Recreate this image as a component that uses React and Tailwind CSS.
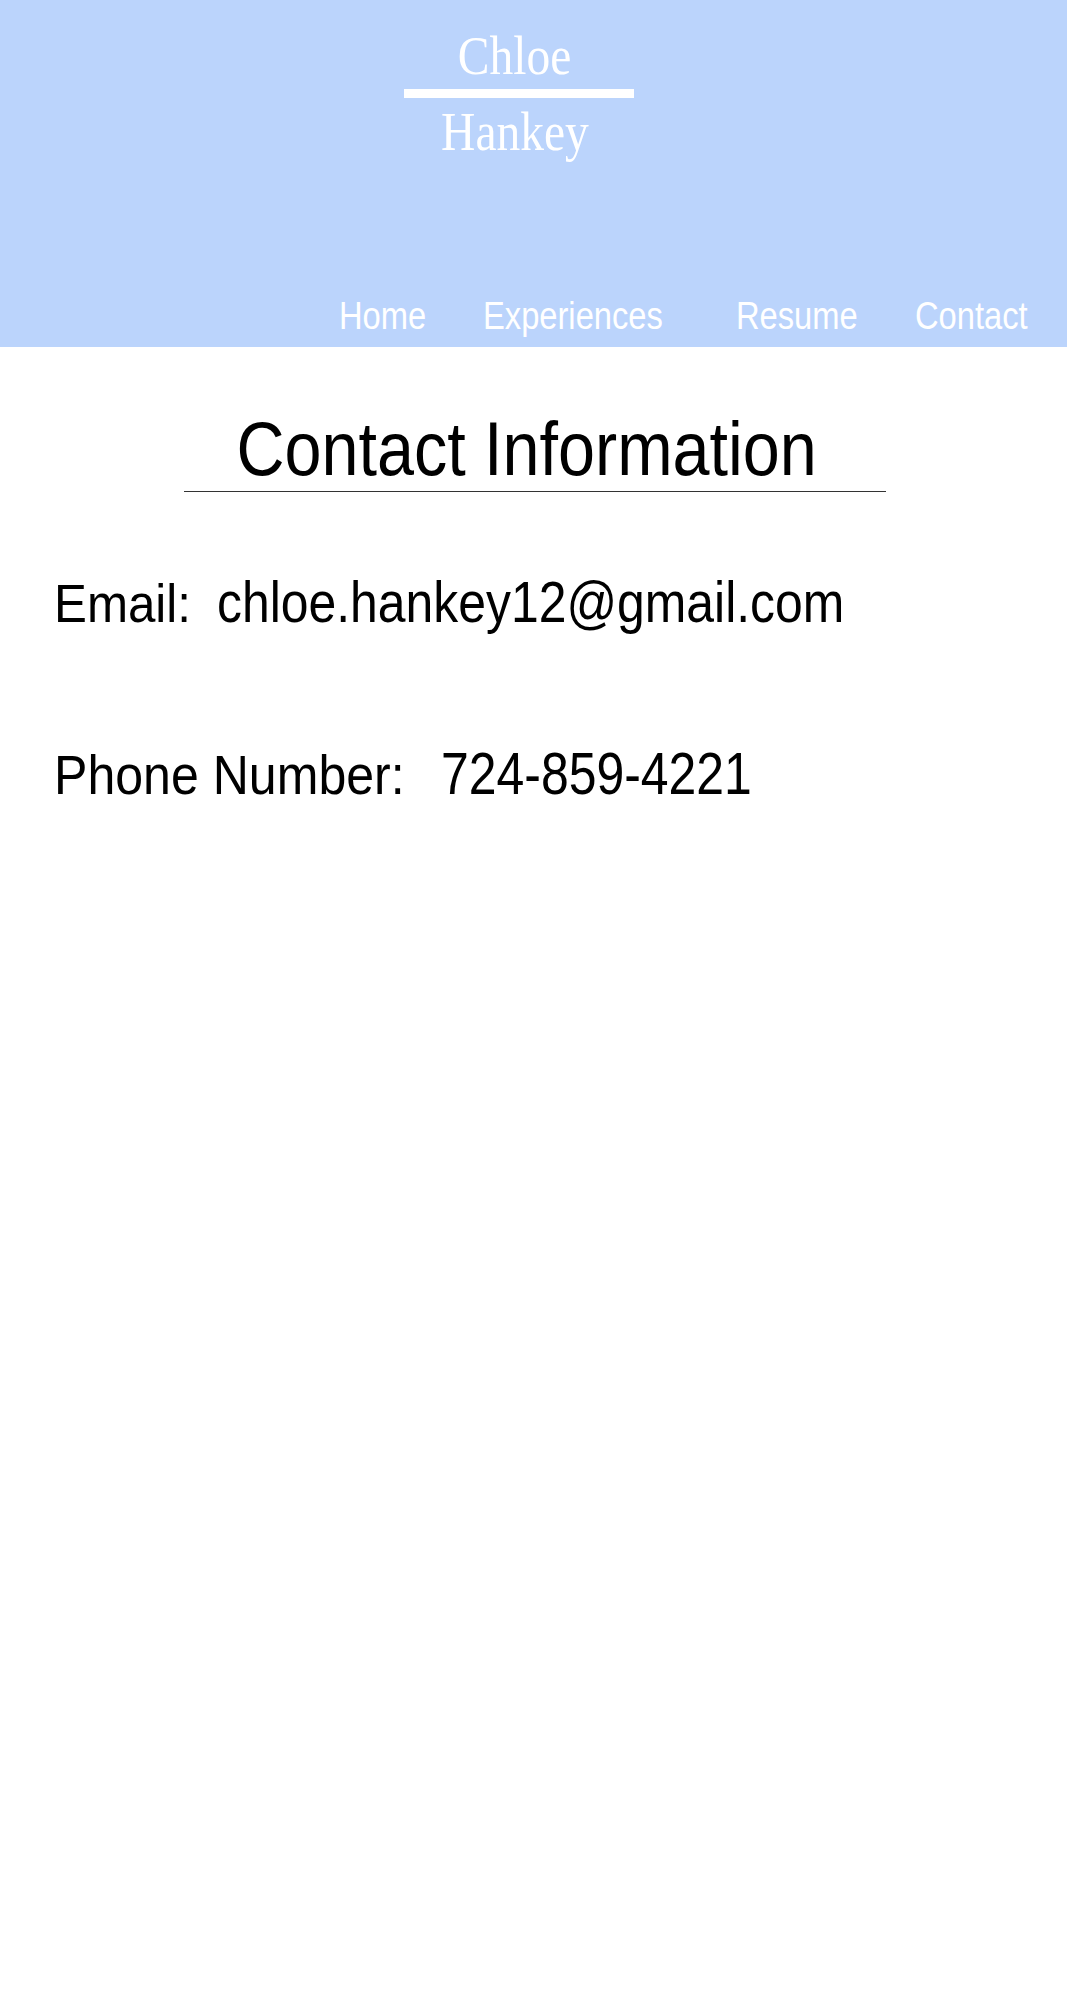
import React from 'react';

const sans = { fontFamily: '"Liberation Sans", Arial, sans-serif' };
const serif = { fontFamily: '"Liberation Serif", "Times New Roman", serif' };

const navLinks = [
  { label: 'Home', w: 'w-[144px]' },
  { label: 'Experiences', w: 'w-[253px]' },
  { label: 'Resume', w: 'w-[179px]' },
  { label: 'Contact', w: 'w-[140px]' },
];

const App = () => {
  return (
    <div className="min-h-[2000px] bg-white">
      {/* header */}
      <header className="flex h-[347px] flex-col bg-[#bbd4fc] text-white">
        <div className="ml-[404px] flex w-[230px] flex-col items-center pt-[29px]" style={serif}>
          <span className="mr-[10px] inline-block origin-center scale-x-[0.88] text-[54px] leading-none">Chloe</span>
          <div className="mt-[6px] h-[9px] w-full bg-white" />
          <span className="mr-[8px] mt-[7px] inline-block origin-center scale-x-[0.88] text-[54px] leading-none">Hankey</span>
        </div>

        <nav className="mt-auto flex pb-[11px] pl-[339px]" style={sans}>
          {navLinks.map((link) => (
            <a key={link.label} href="#" className={`${link.w} shrink-0 whitespace-nowrap`}>
              <span className="inline-block origin-left scale-x-[0.86] text-[38px] leading-none">{link.label}</span>
            </a>
          ))}
        </nav>
      </header>

      {/* contact */}
      <main className="text-black" style={sans}>
        <h1 className="mt-[64px] whitespace-nowrap pr-[13px] text-center text-[76px] font-normal leading-none">
          <span className="inline-block origin-center scale-x-[0.875]">Contact Information</span>
        </h1>
        <div className="ml-[184px] mt-[4px] h-px w-[702px] bg-[#333333]" />

        <div className="mt-[82px] flex items-baseline whitespace-nowrap pl-[54px]">
          <div className="w-[163px] shrink-0">
            <span className="inline-block origin-left scale-x-[0.913] text-[54px] leading-none">Email:</span>
          </div>
          <span className="inline-block origin-left scale-x-[0.875] text-[57px] leading-none">chloe.hankey12@gmail.com</span>
        </div>

        <div className="mt-[113px] flex items-baseline whitespace-nowrap pl-[54px]">
          <div className="w-[387px] shrink-0">
            <span className="inline-block origin-left scale-x-[0.894] text-[56px] leading-none">Phone Number:</span>
          </div>
          <span className="inline-block origin-left scale-x-[0.832] text-[60px] leading-none">724-859-4221</span>
        </div>
      </main>
    </div>
  );
};

export default App;
